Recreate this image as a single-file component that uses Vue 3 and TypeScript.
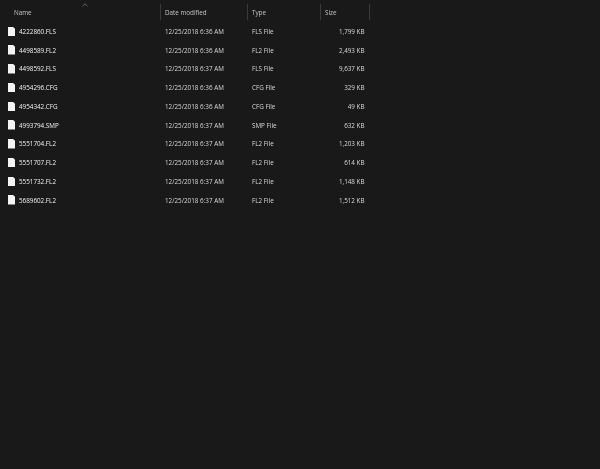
<script setup lang="ts">
interface FileRow { name: string; date: string; type: string; size: string }
const files: FileRow[] = [
  { name: '4222860.FLS', date: '12/25/2018 6:36 AM', type: 'FLS File', size: '1,799 KB' },
  { name: '4498589.FL2', date: '12/25/2018 6:36 AM', type: 'FL2 File', size: '2,493 KB' },
  { name: '4498592.FLS', date: '12/25/2018 6:37 AM', type: 'FLS File', size: '9,637 KB' },
  { name: '4954296.CFG', date: '12/25/2018 6:36 AM', type: 'CFG File', size: '329 KB' },
  { name: '4954342.CFG', date: '12/25/2018 6:36 AM', type: 'CFG File', size: '49 KB' },
  { name: '4993794.SMP', date: '12/25/2018 6:37 AM', type: 'SMP File', size: '632 KB' },
  { name: '5551704.FL2', date: '12/25/2018 6:37 AM', type: 'FL2 File', size: '1,203 KB' },
  { name: '5551707.FL2', date: '12/25/2018 6:37 AM', type: 'FL2 File', size: '614 KB' },
  { name: '5551732.FL2', date: '12/25/2018 6:37 AM', type: 'FL2 File', size: '1,148 KB' },
  { name: '5689602.FL2', date: '12/25/2018 6:37 AM', type: 'FL2 File', size: '1,512 KB' },
]
</script>

<template>
  <main class="explorer">
    <header class="head">
      <div class="hcell name-col">
        <svg class="sort" width="6" height="4" viewBox="0 0 6 4"><path d="M0.5 3.2 L3 0.8 L5.5 3.2" fill="none" stroke="#8a8a8a" stroke-width="0.7" /></svg>
        Name
      </div>
      <div class="hcell date-col">Date modified</div>
      <div class="hcell type-col">Type</div>
      <div class="hcell size-col">Size</div>
    </header>
    <div class="rows">
      <div v-for="f in files" :key="f.name" class="row">
        <div class="name">
          <svg class="icon" width="7.5" height="9.5" viewBox="0 0 7.5 9.5"><path d="M0 0 H5.2 L7.5 2.3 V9.5 H0 Z" fill="#f4f4f4" /></svg>
          {{ f.name }}
        </div>
        <div class="date">{{ f.date }}</div>
        <div class="type">{{ f.type }}</div>
        <div class="size">{{ f.size }}</div>
      </div>
    </div>
  </main>
</template>

<style scoped>
.explorer {
  width: 600px;
  height: 469px;
  background: #191919;
  font-family: "Open Sans", "Noto Sans", sans-serif;
  font-size: 6.3px;
  overflow: hidden;
}
.head {
  display: flex;
  padding-top: 4px;
  height: 16px;
  will-change: transform;
}
.hcell {
  position: relative;
  height: 16px;
  display: flex;
  align-items: center;
  padding-left: 4px;
  box-sizing: border-box;
  color: #c4c4c4;
  border-right: 1px solid #3a3a3a;
}
.name-col { width: 161px; padding-left: 14px; }
.date-col { width: 87px; }
.type-col { width: 73px; }
.size-col { width: 49px; }
.sort { position: absolute; left: 82px; top: -1px; }
.rows { padding-top: 2px; will-change: transform; }
.row {
  display: flex;
  align-items: center;
  height: 18.75px;
}
.name {
  width: 165px;
  padding-left: 7.5px;
  box-sizing: border-box;
  display: flex;
  align-items: center;
  gap: 4px;
  color: #f0f0f0;
}
.date { width: 87px; }
.type { width: 60px; }
.size { width: 52.5px; text-align: right; }
.date, .type, .size { color: #d8d8d8; }
</style>
